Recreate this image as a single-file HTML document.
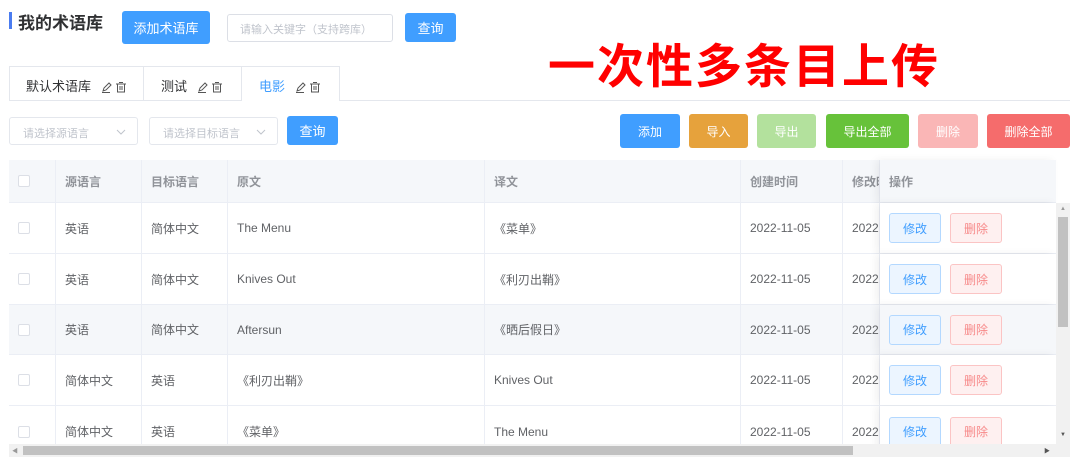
<!DOCTYPE html>
<html><head><meta charset="utf-8"><style>
*{box-sizing:border-box;margin:0;padding:0}
body{width:1080px;height:468px;background:#fff;position:relative;overflow:hidden;font-family:"Liberation Sans","Noto Sans CJK SC",sans-serif;font-size:12px;color:#606266}
.a{position:absolute}
.btn{position:absolute;color:#fff;border-radius:3px;display:flex;align-items:center;justify-content:center;font-size:12px}
.cell{position:absolute;display:flex;align-items:center;padding-left:9px;border-right:1px solid #ebeef5;height:100%}
.row{position:absolute;left:9px;width:1047px;border-bottom:1px solid #ebeef5;background:#fff}
.cb{width:12px;height:12px;border:1px solid #dcdfe6;border-radius:2px;background:#fff}
.op{position:absolute;left:871px;width:176px;height:100%;display:flex;align-items:center;padding-left:9px;gap:9px;box-shadow:-4px 0 8px rgba(0,0,0,.06)}
.e{width:52px;height:30px;border:1px solid #b3d8ff;background:#ecf5ff;color:#409eff;border-radius:3px;display:flex;align-items:center;justify-content:center}
.d{width:52px;height:30px;border:1px solid #fbc4c4;background:#fef0f0;color:#f78989;border-radius:3px;display:flex;align-items:center;justify-content:center}
.ic{display:inline-block;vertical-align:-2px;margin-left:10px}
</style></head><body>
<svg width="0" height="0" style="position:absolute"><defs>
<symbol id="pt" viewBox="0 0 26 12"><path d="M2 10 L3 7 L8 2 L10 4 L5 9 Z M1 11.5 H9" fill="none" stroke="#555" stroke-width="1"/><rect x="16.5" y="3" width="7" height="8" fill="none" stroke="#555"/><path d="M15 3 H25 M18 1.5 H22 M19 5 V9 M21 5 V9" stroke="#555" fill="none"/></symbol></defs></svg>
<div class="a" style="left:9px;top:12px;width:3px;height:17px;background:#4a7cf0"></div>
<div class="a" style="left:18px;top:9px;font-size:17px;font-weight:bold;color:#303133">我的术语库</div>
<div class="btn" style="left:122px;top:11px;width:88px;height:33px;background:#409eff;font-size:13px">添加术语库</div>
<div class="a" style="left:227px;top:14px;width:166px;height:28px;border:1px solid #dcdfe6;border-radius:3px;color:#c0c4cc;font-size:11px;padding:6px 0 0 12px">请输入关键字（支持跨库）</div>
<div class="btn" style="left:405px;top:13px;width:51px;height:29px;background:#409eff;font-size:13px">查询</div>
<div class="a" style="left:548px;top:28px;font-size:47px;font-weight:bold;color:#f00;letter-spacing:2px;white-space:nowrap">一次性多条目上传</div>
<div class="a" style="left:9px;top:100px;width:1061px;height:1px;background:#e4e7ed"></div>
<div class="a" style="left:9px;top:66px;width:331px;height:34px;border:1px solid #e4e7ed;border-bottom:none"></div>
<div class="a" style="left:143px;top:66px;width:1px;height:34px;background:#e4e7ed"></div>
<div class="a" style="left:241px;top:66px;width:1px;height:35px;background:#e4e7ed"></div>
<div class="a" style="left:242px;top:100px;width:97px;height:1px;background:#fff"></div>
<div class="a" style="left:26px;top:76px;color:#303133;font-size:13px">默认术语库<svg class="ic" width="26" height="12"><use href="#pt"/></svg></div>
<div class="a" style="left:161px;top:76px;color:#303133;font-size:13px">测试<svg class="ic" width="26" height="12"><use href="#pt"/></svg></div>
<div class="a" style="left:259px;top:76px;color:#409eff;font-size:13px">电影<svg class="ic" width="26" height="12"><use href="#pt"/></svg></div>
<div class="a" style="left:9px;top:117px;width:129px;height:28px;border:1px solid #e4e7ed;border-radius:3px;color:#c0c4cc;font-size:11px;padding:7px 0 0 13px">请选择源语言<svg style="position:absolute;right:11px;top:11px" width="10" height="6"><path d="M1 1 L5 5 L9 1" fill="none" stroke="#c0c4cc"/></svg></div>
<div class="a" style="left:149px;top:117px;width:129px;height:28px;border:1px solid #e4e7ed;border-radius:3px;color:#c0c4cc;font-size:11px;padding:7px 0 0 13px">请选择目标语言<svg style="position:absolute;right:11px;top:11px" width="10" height="6"><path d="M1 1 L5 5 L9 1" fill="none" stroke="#c0c4cc"/></svg></div>
<div class="btn" style="left:287px;top:116px;width:51px;height:29px;background:#409eff;font-size:13px">查询</div>
<div class="btn" style="left:620px;top:114px;width:60px;height:34px;background:#409eff">添加</div>
<div class="btn" style="left:689px;top:114px;width:59px;height:34px;background:#e6a23c">导入</div>
<div class="btn" style="left:757px;top:114px;width:59px;height:34px;background:#b3e19d">导出</div>
<div class="btn" style="left:826px;top:114px;width:83px;height:34px;background:#67c23a">导出全部</div>
<div class="btn" style="left:918px;top:114px;width:60px;height:34px;background:#fab6b6">删除</div>
<div class="btn" style="left:987px;top:114px;width:83px;height:34px;background:#f56c6c">删除全部</div>

<div class="row" style="top:160px;height:43px;background:#f5f7fa;color:#909399;font-weight:bold;font-size:12px">
<div class="cell" style="left:0;width:47px"><div class="cb"></div></div>
<div class="cell" style="left:47px;width:86px">源语言</div>
<div class="cell" style="left:133px;width:86px">目标语言</div>
<div class="cell" style="left:219px;width:257px">原文</div>
<div class="cell" style="left:476px;width:256px">译文</div>
<div class="cell" style="left:732px;width:102px">创建时间</div>
<div class="cell" style="left:834px;width:37px;overflow:hidden;white-space:nowrap">修改时间</div>
<div class="op" style="background:#f5f7fa">操作</div>
</div>

<div class="row" style="top:203px;height:51px">
<div class="cell" style="left:0;width:47px"><div class="cb"></div></div><div class="cell" style="left:47px;width:86px">英语</div><div class="cell" style="left:133px;width:86px">简体中文</div><div class="cell" style="left:219px;width:257px">The Menu</div><div class="cell" style="left:476px;width:256px">《菜单》</div><div class="cell" style="left:732px;width:102px">2022-11-05</div><div class="cell" style="left:834px;width:37px;overflow:hidden">2022-</div>
<div class="op" style="background:#fff"><div class="e">修改</div><div class="d">删除</div></div></div>
<div class="row" style="top:254px;height:51px">
<div class="cell" style="left:0;width:47px"><div class="cb"></div></div><div class="cell" style="left:47px;width:86px">英语</div><div class="cell" style="left:133px;width:86px">简体中文</div><div class="cell" style="left:219px;width:257px">Knives Out</div><div class="cell" style="left:476px;width:256px">《利刃出鞘》</div><div class="cell" style="left:732px;width:102px">2022-11-05</div><div class="cell" style="left:834px;width:37px;overflow:hidden">2022-</div>
<div class="op" style="background:#fff"><div class="e">修改</div><div class="d">删除</div></div></div>
<div class="row" style="top:305px;height:50px;background:#f5f7fa">
<div class="cell" style="left:0;width:47px"><div class="cb"></div></div><div class="cell" style="left:47px;width:86px">英语</div><div class="cell" style="left:133px;width:86px">简体中文</div><div class="cell" style="left:219px;width:257px">Aftersun</div><div class="cell" style="left:476px;width:256px">《晒后假日》</div><div class="cell" style="left:732px;width:102px">2022-11-05</div><div class="cell" style="left:834px;width:37px;overflow:hidden">2022-</div>
<div class="op" style="background:#f5f7fa"><div class="e">修改</div><div class="d">删除</div></div></div>
<div class="row" style="top:355px;height:51px">
<div class="cell" style="left:0;width:47px"><div class="cb"></div></div><div class="cell" style="left:47px;width:86px">简体中文</div><div class="cell" style="left:133px;width:86px">英语</div><div class="cell" style="left:219px;width:257px">《利刃出鞘》</div><div class="cell" style="left:476px;width:256px">Knives Out</div><div class="cell" style="left:732px;width:102px">2022-11-05</div><div class="cell" style="left:834px;width:37px;overflow:hidden">2022-</div>
<div class="op" style="background:#fff"><div class="e">修改</div><div class="d">删除</div></div></div>
<div class="row" style="top:406px;height:38px;overflow:hidden;border:none">
<div style="position:absolute;top:0;left:0;width:100%;height:51px">
<div class="cell" style="left:0;width:47px"><div class="cb"></div></div><div class="cell" style="left:47px;width:86px">简体中文</div><div class="cell" style="left:133px;width:86px">英语</div><div class="cell" style="left:219px;width:257px">《菜单》</div><div class="cell" style="left:476px;width:256px">The Menu</div><div class="cell" style="left:732px;width:102px">2022-11-05</div><div class="cell" style="left:834px;width:37px;overflow:hidden">2022-</div>
<div class="op" style="background:#fff"><div class="e">修改</div><div class="d">删除</div></div></div></div>
<div class="a" style="left:1056px;top:203px;width:14px;height:241px;background:#f1f1f1"></div>
<div class="a" style="left:1058px;top:217px;width:10px;height:110px;background:#c1c1c1"></div>
<div class="a" style="left:1060px;top:206px;font-size:6px;color:#999">▲</div>
<div class="a" style="left:1060px;top:432px;font-size:6px;color:#555">▼</div>
<div class="a" style="left:9px;top:444px;width:1061px;height:13px;background:#f1f1f1"></div>
<div class="a" style="left:23px;top:446px;width:830px;height:9px;background:#c1c1c1"></div>
<div class="a" style="left:12px;top:446px;font-size:6px;color:#999">◀</div>
<div class="a" style="left:1044px;top:446px;font-size:6px;color:#555">▶</div>
</body></html>
